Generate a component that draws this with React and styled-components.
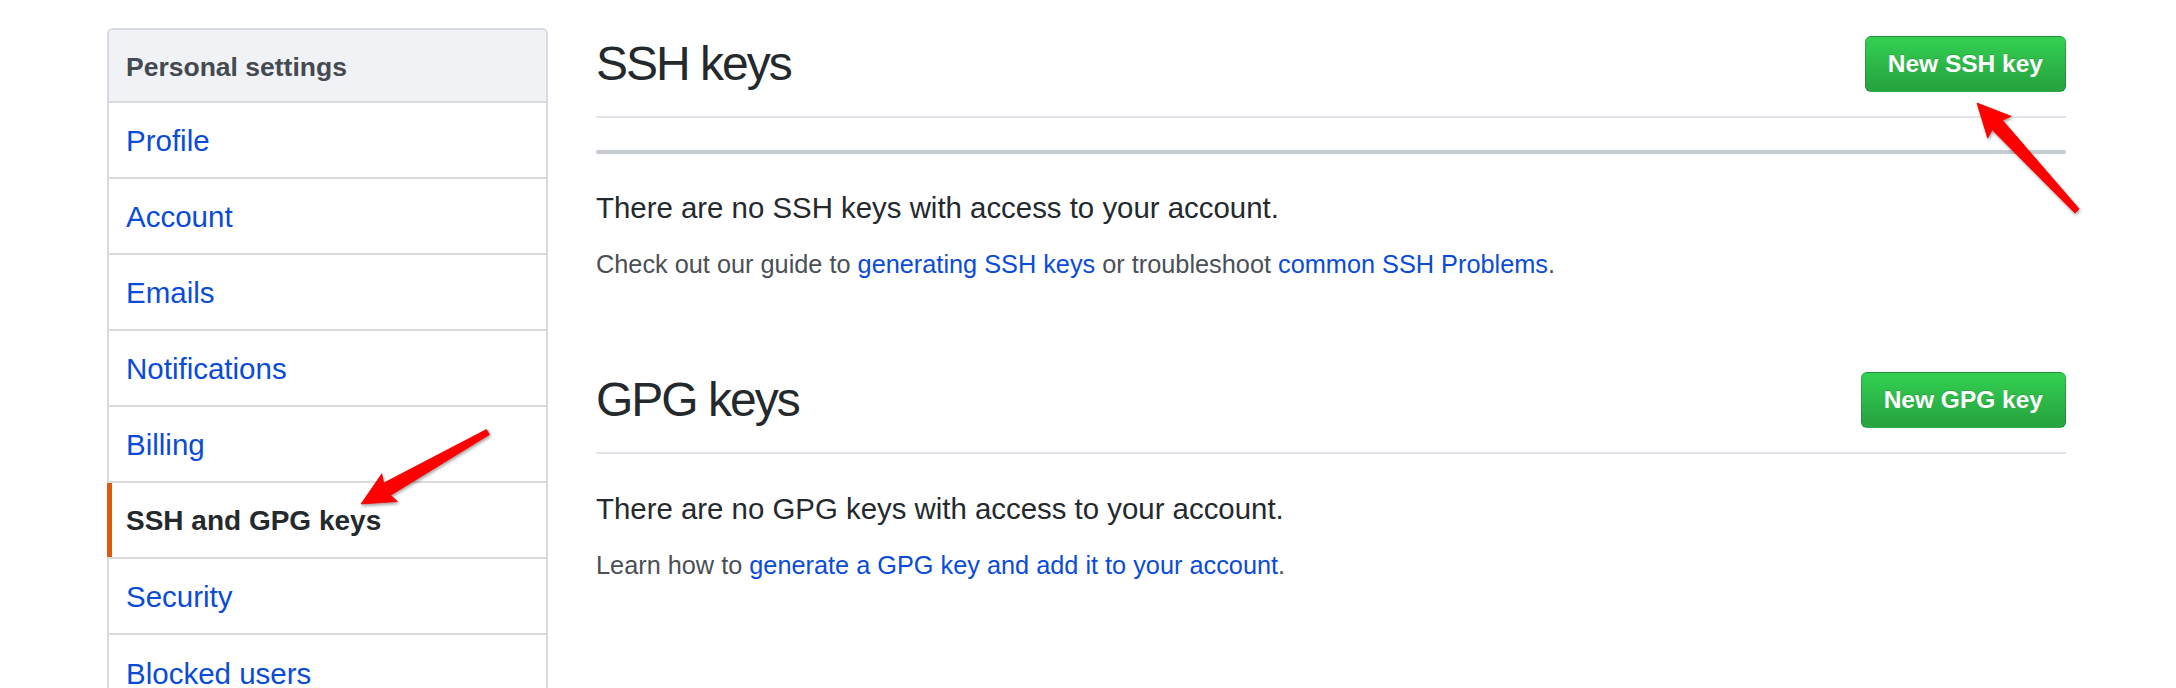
import styled, { createGlobalStyle, css } from "styled-components";

const GlobalStyle = createGlobalStyle`
  html, body {
    margin: 0;
    padding: 0;
    background: #fff;
    overflow: hidden;
  }
  body {
    font-family: "Liberation Sans", Arial, Helvetica, sans-serif;
    color: #24292e;
  }
  * {
    box-sizing: border-box;
  }
`;

const Page = styled.div`
  position: relative;
  width: 2176px;
  height: 688px;
  overflow: hidden;
  display: flex;
  align-items: flex-start;
  gap: 48px;
  padding: 28px 110px 0 107px;
`;

const Menu = styled.nav`
  flex: 0 0 441px;
  display: flex;
  flex-direction: column;
  border: 2px solid #d7dade;
  border-radius: 6px;
  background: #fff;
`;

const MenuHeading = styled.div`
  height: 73px;
  display: flex;
  align-items: center;
  padding: 3px 17px 0;
  background: #f1f2f5;
  border-bottom: 2px solid #d7dade;
  border-radius: 4px 4px 0 0;
  font-size: 26.5px;
  font-weight: 700;
  color: #444a51;
`;

const MenuItem = styled.a`
  position: relative;
  display: flex;
  align-items: center;
  flex: 0 0 76px;
  padding: 2px 17px 0;
  border-bottom: 2px solid #d7dade;
  font-size: 29.5px;
  color: #0a4bd8;
  text-decoration: none;

  &:last-child {
    border-bottom: 0;
  }

  ${(p) =>
    p.$selected &&
    css`
      font-size: 28px;
      font-weight: 700;
      color: #24292e;

      &::before {
        content: "";
        position: absolute;
        top: 0;
        bottom: 0;
        left: -2px;
        width: 5px;
        background: #df5a0e;
      }
    `}
`;

const Main = styled.main`
  flex: 1;
  padding-top: 8px;
`;

const Subhead = styled.div`
  display: flex;
  align-items: center;
  justify-content: space-between;
  margin-top: ${(p) => p.$top || 0}px;
  padding-bottom: 24px;
  border-bottom: 2px solid #e1e4e8;
`;

const Heading = styled.h2`
  margin: 0;
  font-size: 48px;
  font-weight: 400;
  line-height: 56px;
  letter-spacing: -2px;
  color: #24292e;
`;

const Button = styled.button`
  height: 56px;
  padding: 0 22px;
  border: 1px solid rgba(27, 31, 35, 0.2);
  border-radius: 6px;
  background-image: linear-gradient(180deg, #33d152 0%, #27a540 90%);
  color: #fff;
  font-family: "Liberation Sans", Arial, sans-serif;
  font-size: 24.5px;
  font-weight: 700;
  text-shadow: 0 -1px 0 rgba(0, 0, 0, 0.15);
  cursor: pointer;
`;

const EmptyList = styled.div`
  margin-top: 32px;
  height: 4px;
  border-radius: 2px;
  background: #c6cbd1;
`;

const Lead = styled.p`
  margin: ${(p) => p.$top}px 0 0;
  font-size: 29.4px;
  line-height: 43.5px;
  color: #24292e;
`;

const Note = styled.p`
  margin: 16px 0 0;
  font-size: 25.3px;
  line-height: 37.5px;
  color: #4a4f56;
`;

const Link = styled.a`
  color: #0a4bd8;
  text-decoration: none;
`;

const Overlay = styled.svg`
  position: absolute;
  left: 0;
  top: 0;
  pointer-events: none;
`;

// tapered annotation arrow from tail to tip
function arrowPoints(tail, tip) {
  const dx = tip[0] - tail[0];
  const dy = tip[1] - tail[1];
  const len = Math.hypot(dx, dy);
  const ux = dx / len;
  const uy = dy / len;
  const nx = -uy;
  const ny = ux;
  const head = 30;
  const bx = tip[0] - ux * head;
  const by = tip[1] - uy * head;
  const pt = (x, y, w) => `${(x + nx * w).toFixed(1)},${(y + ny * w).toFixed(1)}`;
  return [
    pt(tail[0], tail[1], 3),
    pt(bx, by, 7),
    pt(bx - ux * 3, by - uy * 3, 16),
    `${tip[0]},${tip[1]}`,
    pt(bx - ux * 3, by - uy * 3, -16),
    pt(bx, by, -7),
    pt(tail[0], tail[1], -3),
  ].join(" ");
}

const arrows = [
  { tail: [488, 432], tip: [361, 504] },
  { tail: [2077, 211], tip: [1977, 103] },
];

const menu = [
  "Profile",
  "Account",
  "Emails",
  "Notifications",
  "Billing",
  "SSH and GPG keys",
  "Security",
  "Blocked users",
];

export default function App() {
  return (
    <>
      <GlobalStyle />
      <Page>
        <Menu>
          <MenuHeading>Personal settings</MenuHeading>
          {menu.map((item) => (
            <MenuItem key={item} href="#" $selected={item === "SSH and GPG keys"}>
              {item}
            </MenuItem>
          ))}
        </Menu>

        <Main>
          <Subhead>
            <Heading>SSH keys</Heading>
            <Button>New SSH key</Button>
          </Subhead>
          <EmptyList />
          <Lead $top={32}>There are no SSH keys with access to your account.</Lead>
          <Note>
            Check out our guide to <Link href="#">generating SSH keys</Link> or troubleshoot{" "}
            <Link href="#">common SSH Problems</Link>.
          </Note>

          <Subhead $top={89}>
            <Heading>GPG keys</Heading>
            <Button>New GPG key</Button>
          </Subhead>
          <Lead $top={33}>There are no GPG keys with access to your account.</Lead>
          <Note>
            Learn how to <Link href="#">generate a GPG key and add it to your account</Link>.
          </Note>
        </Main>

        <Overlay width="2176" height="688" viewBox="0 0 2176 688">
          <defs>
            <filter id="arrowShadow" x="-20%" y="-20%" width="140%" height="140%">
              <feDropShadow dx="1" dy="2" stdDeviation="1.5" floodColor="#000" floodOpacity="0.35" />
            </filter>
          </defs>
          {arrows.map((a, i) => (
            <polygon
              key={i}
              points={arrowPoints(a.tail, a.tip)}
              fill="#fe0000"
              stroke="#e80000"
              strokeWidth="0.8"
              strokeLinejoin="round"
              filter="url(#arrowShadow)"
            />
          ))}
        </Overlay>
      </Page>
    </>
  );
}
